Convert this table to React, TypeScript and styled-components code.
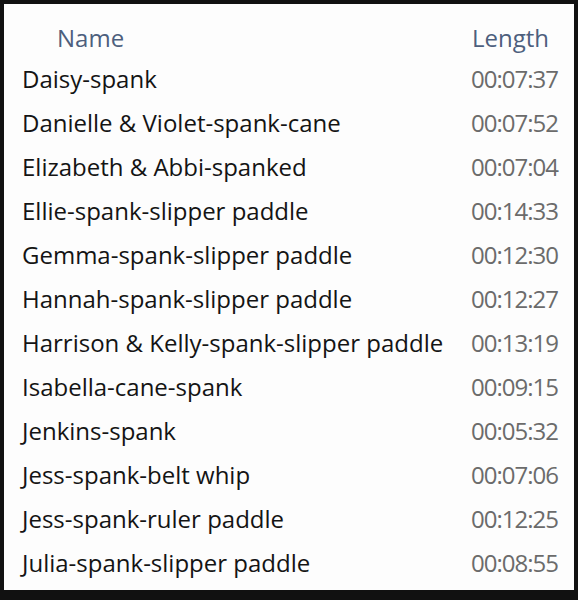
import React from "react";
import styled, { createGlobalStyle } from "styled-components";

const Global = createGlobalStyle`
  html, body { margin: 0; padding: 0; background: #111; }
  #root { width: 578px; height: 600px; }
`;

const Frame = styled.div`
  box-sizing: border-box;
  width: 578px;
  height: 600px;
  background: #111;
  padding: 4px 4px 10px 4px;
`;

const Panel = styled.div`
  box-sizing: border-box;
  width: 100%;
  height: 100%;
  background: #fdfdfd;
  font-family: "Open Sans", "Noto Sans", sans-serif;
  display: flex;
  flex-direction: column;
`;

const Header = styled.div`
  box-sizing: border-box;
  display: grid;
  grid-template-columns: 1fr auto;
  height: 52px;
  align-items: center;
  padding: 14px 25px 0 53px;
  color: #4d5f7d;
  font-size: 24px;
`;

const Row = styled.div`
  display: grid;
  grid-template-columns: 1fr auto;
  height: 44px;
  align-items: center;
  padding: 0 16px 0 18px;
  font-size: 24px;
`;

const NameCell = styled.span`
  color: #141414;
  white-space: nowrap;
`;

const TimeCell = styled.span`
  color: #6b6b6b;
  letter-spacing: -1px;
`;

const rows: [string, string][] = [
  ["Daisy-spank", "00:07:37"],
  ["Danielle & Violet-spank-cane", "00:07:52"],
  ["Elizabeth & Abbi-spanked", "00:07:04"],
  ["Ellie-spank-slipper paddle", "00:14:33"],
  ["Gemma-spank-slipper paddle", "00:12:30"],
  ["Hannah-spank-slipper paddle", "00:12:27"],
  ["Harrison & Kelly-spank-slipper paddle", "00:13:19"],
  ["Isabella-cane-spank", "00:09:15"],
  ["Jenkins-spank", "00:05:32"],
  ["Jess-spank-belt whip", "00:07:06"],
  ["Jess-spank-ruler paddle", "00:12:25"],
  ["Julia-spank-slipper paddle", "00:08:55"],
];

export default function App() {
  return (
    <>
      <Global />
      <Frame>
        <Panel>
          <Header>
            <span>Name</span>
            <span>Length</span>
          </Header>
          {rows.map(([n, t]) => (
            <Row key={n}>
              <NameCell>{n}</NameCell>
              <TimeCell>{t}</TimeCell>
            </Row>
          ))}
        </Panel>
      </Frame>
    </>
  );
}
